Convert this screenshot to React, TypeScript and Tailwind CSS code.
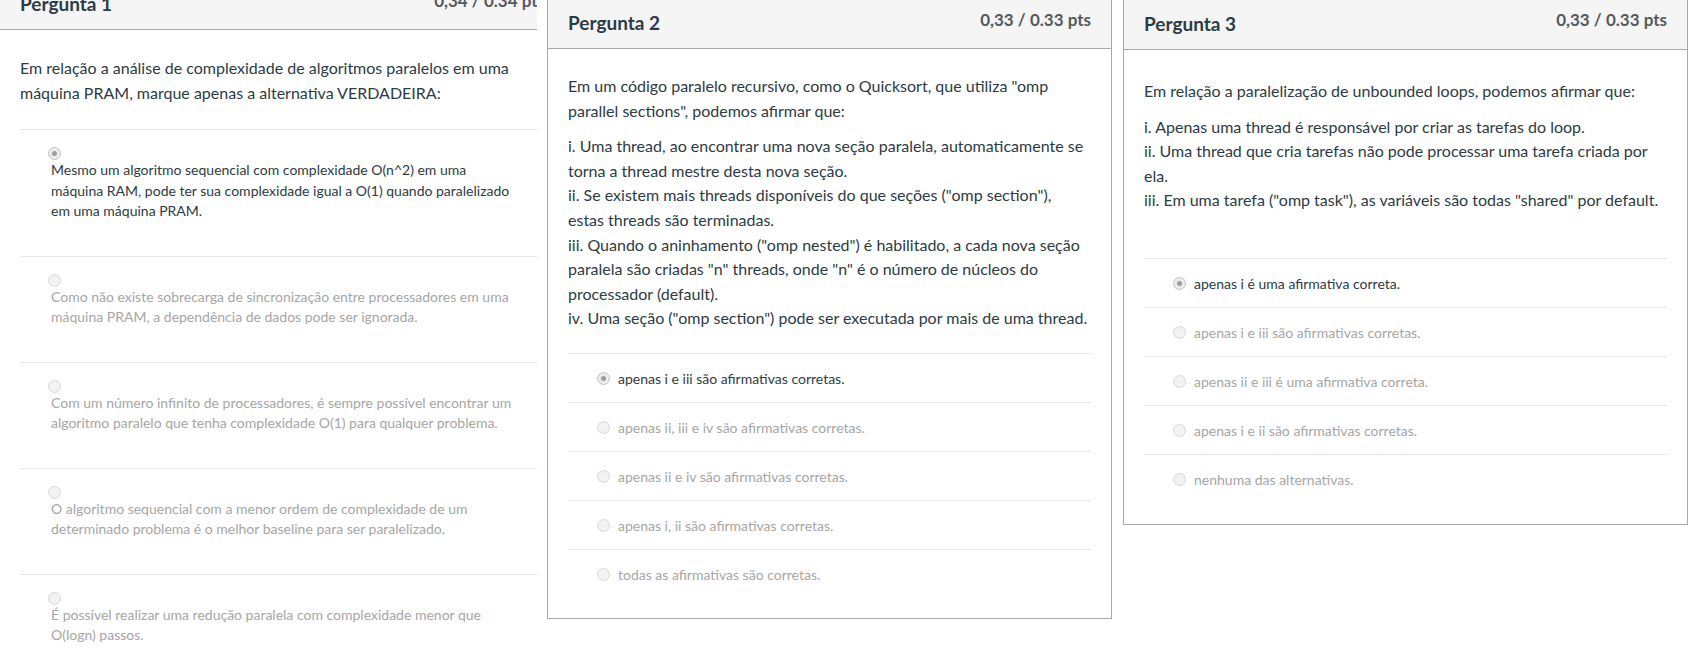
import React from "react";

type Option = { text: React.ReactNode; selected?: boolean };

const q1Options: Option[] = [
  {
    text: (
      <>
        Mesmo um algoritmo sequencial com complexidade O(n^2) em uma
        <br />
        máquina RAM, pode ter sua complexidade igual a O(1) quando paralelizado em uma máquina PRAM.
      </>
    ),
    selected: true,
  },
  { text: "Como não existe sobrecarga de sincronização entre processadores em uma máquina PRAM, a dependência de dados pode ser ignorada." },
  { text: "Com um número infinito de processadores, é sempre possível encontrar um algoritmo paralelo que tenha complexidade O(1) para qualquer problema." },
  { text: "O algoritmo sequencial com a menor ordem de complexidade de um determinado problema é o melhor baseline para ser paralelizado." },
  { text: "É possível realizar uma redução paralela com complexidade menor que O(logn) passos." },
];

const q2Options: Option[] = [
  { text: "apenas i e iii são afirmativas corretas.", selected: true },
  { text: "apenas ii, iii e iv são afirmativas corretas." },
  { text: "apenas ii e iv são afirmativas corretas." },
  { text: "apenas i, ii são afirmativas corretas." },
  { text: "todas as afirmativas são corretas." },
];

const q3Options: Option[] = [
  { text: "apenas i é uma afirmativa correta.", selected: true },
  { text: "apenas i e iii são afirmativas corretas." },
  { text: "apenas ii e iii é uma afirmativa correta." },
  { text: "apenas i e ii são afirmativas corretas." },
  { text: "nenhuma das alternativas." },
];

const Radio = ({ selected, className = "" }: { selected?: boolean; className?: string }) => (
  <span
    className={`flex h-[13px] w-[13px] shrink-0 items-center justify-center rounded-full border ${
      selected ? "border-[#c2c2c2] bg-[#ececec]" : "border-[#d9d9d9] bg-[#f2f2f2]"
    } ${className}`}
  >
    {selected && <span className="h-[5px] w-[5px] rounded-full bg-[#9d9d9d]" />}
  </span>
);

const Header = ({ title, pts, h, pt }: { title: string; pts: string; h: string; pt: string }) => (
  <div className={`flex justify-between border-b border-[#a9a9a9] bg-[#f5f5f5] px-5 ${h}`}>
    <h2 className={`text-[19px] leading-[24px] font-bold text-[#2d3b45] ${pt}`}>{title}</h2>
    <span className="pt-[8px] text-[17px] leading-[24px] font-bold text-[#555a5e]">{pts}</span>
  </div>
);

const InlineOptions = ({ options }: { options: Option[] }) => (
  <div>
    {options.map((o, i) => (
      <div
        key={i}
        className="flex items-center border-t border-[#e8e8e8] pl-[29px] pt-[14px] pb-[13px]"
      >
        <Radio selected={o.selected} />
        <span
          className={`ml-2 text-[14px] leading-[21px] ${o.selected ? "text-[#2d3b45]" : "text-[#a6a6a6]"}`}
        >
          {o.text}
        </span>
      </div>
    ))}
  </div>
);

export default function App() {
  return (
    <div className="flex h-[663px] items-start overflow-hidden bg-white font-['Lato',sans-serif]">
      {/* Pergunta 1, scrolled a bit and cut on the right */}
      <div className="-mt-[20px] w-[537px] shrink-0 overflow-hidden">
        <div className="w-[565px] border-t border-[#a9a9a9]">
          <Header title="Pergunta 1" pts="0,34 / 0.34 pts" h="h-[49px]" pt="pt-[11px]" />
          <div className="px-5 pt-[26px]">
            <p className="text-[16px] leading-[24.6px] text-[#2d3b45]">
              Em relação a análise de complexidade de algoritmos paralelos em uma máquina PRAM, marque apenas a
              alternativa VERDADEIRA:
            </p>
            <div className="mt-[24px]">
              {q1Options.map((o, i) => (
                <div key={i} className="border-t border-[#e8e8e8] pl-[31px] pr-5 pt-[17px] pb-[34px]">
                  <Radio selected={o.selected} className="-ml-[3px]" />
                  <p
                    className={`text-[14px] leading-[20.5px] ${
                      o.selected ? "text-[#2d3b45]" : "text-[#a6a6a6]"
                    }`}
                  >
                    {o.text}
                  </p>
                </div>
              ))}
            </div>
          </div>
        </div>
      </div>

      {/* Pergunta 2 */}
      <section className="-mt-px ml-[10px] w-[565px] shrink-0 border border-[#a9a9a9] bg-white">
        <Header title="Pergunta 2" pts="0,33 / 0.33 pts" h="h-[49px]" pt="pt-[11px]" />
        <div className="px-5 pt-[25px] pb-5">
          <div className="text-[16px] leading-[24.6px] text-[#2d3b45]">
            <p>
              Em um código paralelo recursivo, como o Quicksort, que utiliza "omp
              <br />
              parallel sections", podemos afirmar que:
            </p>
            <p className="mt-[11px]">
              i. Uma thread, ao encontrar uma nova seção paralela, automaticamente se
              <br />
              torna a thread mestre desta nova seção.
              <br />
              ii. Se existem mais threads disponíveis do que seções ("omp section"),
              <br />
              estas threads são terminadas.
              <br />
              iii. Quando o aninhamento ("omp nested") é habilitado, a cada nova seção
              <br />
              paralela são criadas "n" threads, onde "n" é o número de núcleos do
              <br />
              processador (default).
              <br />
              iv. Uma seção ("omp section") pode ser executada por mais de uma thread.
            </p>
          </div>
          <div className="mt-[22px]">
            <InlineOptions options={q2Options} />
          </div>
        </div>
      </section>

      {/* Pergunta 3 */}
      <section className="-mt-px ml-[11px] w-[565px] shrink-0 border border-[#a9a9a9] bg-white">
        <Header title="Pergunta 3" pts="0,33 / 0.33 pts" h="h-[50px]" pt="pt-[12px]" />
        <div className="px-5 pt-[29px] pb-[21px]">
          <div className="text-[16px] leading-[24.6px] text-[#2d3b45]">
            <p>Em relação a paralelização de unbounded loops, podemos afirmar que:</p>
            <p className="mt-[11px]">
              i. Apenas uma thread é responsável por criar as tarefas do loop.
              <br />
              ii. Uma thread que cria tarefas não pode processar uma tarefa criada por
              <br />
              ela.
              <br />
              iii. Em uma tarefa ("omp task"), as variáveis são todas "shared" por default.
            </p>
            <p className="h-[24.6px]" />
          </div>
          <div className="mt-[20px]">
            <InlineOptions options={q3Options} />
          </div>
        </div>
      </section>
    </div>
  );
}
